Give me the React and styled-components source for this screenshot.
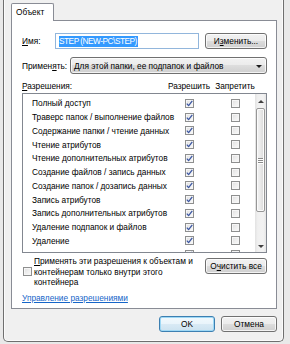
import React from "react";
import styled, { createGlobalStyle } from "styled-components";

const GlobalStyle = createGlobalStyle`
  html, body { margin: 0; padding: 0; }
  body {
    width: 290px;
    height: 344px;
    overflow: hidden;
    background: #e9e9e9;
    font-family: "Liberation Sans", Arial, sans-serif;
    font-size: 8.3px;
    color: #000;
  }
  #root { width: 290px; height: 344px; }
`;

const Screen = styled.div`
  box-sizing: border-box;
  width: 290px;
  height: 344px;
  padding-left: 3px;
`;

const Window = styled.div`
  box-sizing: border-box;
  width: 281px;
  height: 342px;
  border: 1px solid #6f6f6f;
  border-top: none;
  border-radius: 0 0 5px 5px;
  background: #f0f0f0;
  box-shadow: inset 1px 0 0 #fbfbfb, inset -1px 0 0 #fbfbfb, inset 0 -1px 0 #fbfbfb;
  padding: 3px 6px 0 7px;
  display: flex;
  flex-direction: column;
`;

const TabStrip = styled.div`
  display: flex;
  height: 18px;
  margin-bottom: -1px;
  position: relative;
  z-index: 1;
`;

const Tab = styled.div`
  box-sizing: border-box;
  width: 43px;
  height: 18px;
  border: 1px solid #898c95;
  border-bottom: none;
  border-radius: 2px 2px 0 0;
  background: #fff;
  display: flex;
  align-items: center;
  padding: 0 0 2px 4px;
`;

const Panel = styled.div`
  box-sizing: border-box;
  height: 289px;
  border: 1px solid #898c95;
  background: #fff;
  padding: 12px 9px 0 10px;
  display: flex;
  flex-direction: column;
`;

const FieldRow = styled.div`
  display: flex;
  align-items: center;
  height: ${(p) => p.$h}px;
  margin-top: ${(p) => p.$mt || 0}px;
`;

const Label = styled.div`
  width: ${(p) => p.$w}px;
  flex: none;
  white-space: nowrap;
`;

const U = styled.span`
  text-decoration: underline;
`;

const TextBox = styled.div`
  box-sizing: border-box;
  width: 144px;
  height: 16px;
  border: 1px solid #92b6dc;
  background: #fff;
  display: flex;
  align-items: center;
  padding-left: 3px;
  margin-right: 6px;
`;

const Selected = styled.span`
  background: #3399ff;
  color: #fff;
  height: 11px;
  line-height: 11px;
  padding: 0 1px 0 0;
  letter-spacing: -0.5px;
  white-space: nowrap;
`;

const Button = styled.div`
  box-sizing: border-box;
  width: ${(p) => p.$w}px;
  height: ${(p) => p.$h || 16}px;
  flex: none;
  border: 1px solid ${(p) => (p.$default ? "#3c7fb1" : "#707070")};
  border-radius: 3px;
  background: ${(p) =>
    p.$default
      ? "linear-gradient(#f2f9fd 0%, #e9f4fb 50%, #d9eaf5 50%, #cce2f0 100%)"
      : "linear-gradient(#f2f2f2 0%, #ebebeb 50%, #dddddd 50%, #cfcfcf 100%)"};
  box-shadow: inset 0 0 0 1px ${(p) => (p.$default ? "#9ed8f5" : "rgba(255,255,255,0.75)")};
  display: flex;
  align-items: center;
  justify-content: center;
  white-space: nowrap;
  align-self: ${(p) => (p.$top ? "flex-start" : "auto")};
  margin-top: ${(p) => p.$mt || 0}px;
`;

const Select = styled.div`
  box-sizing: border-box;
  width: 197px;
  height: 17px;
  border: 1px solid #707070;
  border-radius: 3px;
  background: linear-gradient(#f2f2f2 0%, #ebebeb 50%, #dddddd 50%, #cfcfcf 100%);
  box-shadow: inset 0 0 0 1px rgba(255, 255, 255, 0.75);
  display: flex;
  align-items: center;
  padding: 0 4px 0 3px;
  white-space: nowrap;
`;

const SelectText = styled.span`
  flex: 1;
`;

const DropArrow = styled.span`
  width: 0;
  height: 0;
  border-left: 3px solid transparent;
  border-right: 3px solid transparent;
  border-top: 3px solid #1a1a1a;
  margin-top: 1px;
`;

const ColumnsHeader = styled.div`
  display: grid;
  grid-template-columns: 1fr 40px 40px;
  column-gap: 6px;
  align-items: center;
  height: 11px;
  margin-top: 6px;
  padding-right: 12px;
  white-space: nowrap;
`;

const HeadCell = styled.div`
  display: flex;
  justify-content: center;
`;

const ListBox = styled.div`
  box-sizing: border-box;
  height: 160px;
  margin-top: 2px;
  border: 1px solid #828790;
  display: flex;
  overflow: hidden;
`;

const Rows = styled.div`
  flex: 1;
  min-width: 0;
  padding: 2.5px 0 0 9px;
  overflow: hidden;
`;

const Row = styled.div`
  display: grid;
  grid-template-columns: 1fr 40px 40px;
  column-gap: 6px;
  align-items: center;
  height: 13.75px;
  white-space: nowrap;
`;

const RowText = styled.div`
  min-width: 0;
  overflow: visible;
`;

const BoxCell = styled.div`
  display: flex;
  justify-content: center;
`;

const CheckBox = styled.span`
  box-sizing: border-box;
  width: 9px;
  height: 9px;
  flex: none;
  display: inline-flex;
  align-items: center;
  justify-content: center;
  border: 1px solid #8e8f8f;
  background: linear-gradient(135deg, #dedede 0%, #eeeeee 50%, #fafafa 100%);
  box-shadow: inset 0 0 0 1px #f6f6f6;
`;

const ScrollBar = styled.div`
  width: 11px;
  flex: none;
  display: flex;
  flex-direction: column;
  align-items: center;
  background: linear-gradient(to right, #e2e2e2 0%, #f0f0f0 25%, #f2f2f2 75%, #e6e6e6 100%);
`;

const ArrowZone = styled.div`
  height: ${(p) => p.$h}px;
  width: 100%;
  display: flex;
  align-items: center;
  justify-content: center;
`;

const ArrowUp = styled.span`
  width: 0;
  height: 0;
  border-left: 3px solid transparent;
  border-right: 3px solid transparent;
  border-bottom: 3px solid #404040;
`;

const ArrowDown = styled.span`
  width: 0;
  height: 0;
  border-left: 3px solid transparent;
  border-right: 3px solid transparent;
  border-top: 3px solid #404040;
`;

const Thumb = styled.div`
  box-sizing: border-box;
  width: 9px;
  height: 104px;
  border: 1px solid #979797;
  border-radius: 2px;
  background: linear-gradient(to right, #f3f3f3 0%, #e9e9e9 50%, #d9d9d9 100%);
  box-shadow: inset 0 0 0 1px #fbfbfb;
  display: flex;
  flex-direction: column;
  align-items: center;
  justify-content: center;
  gap: 1px;
`;

const Grip = styled.span`
  width: 5px;
  height: 1px;
  background: #8a8a8a;
  box-shadow: 0 1px 0 #fff;
`;

const Track = styled.div`
  flex: 1;
`;

const OptionRow = styled.div`
  display: flex;
  justify-content: space-between;
  margin-top: 3px;
`;

const OptionLeft = styled.div`
  display: flex;
  align-items: center;
  gap: 2px;
  padding-left: 1px;
`;

const OptionText = styled.div`
  line-height: 10.5px;
  white-space: nowrap;
`;

const Link = styled.a`
  margin-top: 5px;
  line-height: 11px;
  color: #1565c8;
  text-decoration: underline;
  align-self: flex-start;
  white-space: nowrap;
`;

const Footer = styled.div`
  display: flex;
  justify-content: flex-end;
  gap: 6px;
  margin-top: 7px;
`;

const Check = () => (
  <svg width="7" height="7" viewBox="0 0 7 7">
    <path d="M0.8 3.6 L2.6 5.6 L6.3 0.9" fill="none" stroke="#3d58a3" strokeWidth="1.3" strokeLinejoin="round" />
  </svg>
);

const permissions = [
  "Полный доступ",
  "Траверс папок / выполнение файлов",
  "Содержание папки / чтение данных",
  "Чтение атрибутов",
  "Чтение дополнительных атрибутов",
  "Создание файлов / запись данных",
  "Создание папок / дозапись данных",
  "Запись атрибутов",
  "Запись дополнительных атрибутов",
  "Удаление подпапок и файлов",
  "Удаление",
  "",
];

export default function App() {
  return (
    <Screen>
      <GlobalStyle />
      <Window>
        <TabStrip>
          <Tab>Объект</Tab>
        </TabStrip>
        <Panel>
          <FieldRow $h={16}>
            <Label $w={33}>
              <U>И</U>мя:
            </Label>
            <TextBox>
              <Selected>STEP (NEW-PC\STEP)</Selected>
            </TextBox>
            <Button $w={62}>
              И<U>з</U>менить...
            </Button>
          </FieldRow>
          <FieldRow $h={17} $mt={8}>
            <Label $w={48}>
              Примен<U>я</U>ть:
            </Label>
            <Select>
              <SelectText>Для этой папки, ее подпапок и файлов</SelectText>
              <DropArrow />
            </Select>
          </FieldRow>
          <ColumnsHeader>
            <div>
              <U>Р</U>азрешения:
            </div>
            <HeadCell>Разрешить</HeadCell>
            <HeadCell>Запретить</HeadCell>
          </ColumnsHeader>
          <ListBox>
            <Rows>
              {permissions.map((name, i) => (
                <Row key={i}>
                  <RowText>{name}</RowText>
                  <BoxCell>
                    <CheckBox>
                      <Check />
                    </CheckBox>
                  </BoxCell>
                  <BoxCell>
                    <CheckBox />
                  </BoxCell>
                </Row>
              ))}
            </Rows>
            <ScrollBar>
              <ArrowZone $h={14}>
                <ArrowUp />
              </ArrowZone>
              <Thumb>
                <Grip />
                <Grip />
                <Grip />
              </Thumb>
              <Track />
              <ArrowZone $h={12}>
                <ArrowDown />
              </ArrowZone>
            </ScrollBar>
          </ListBox>
          <OptionRow>
            <OptionLeft>
              <CheckBox />
              <OptionText>
                <U>П</U>рименять эти разрешения к объектам и
                <br />
                контейнерам только внутри этого
                <br />
                контейнера
              </OptionText>
            </OptionLeft>
            <Button $w={62} $top $mt={1.5}>
              О<U>ч</U>истить все
            </Button>
          </OptionRow>
          <Link>Управление разрешениями</Link>
        </Panel>
        <Footer>
          <Button $w={56} $default>
            OK
          </Button>
          <Button $w={56}>Отмена</Button>
        </Footer>
      </Window>
    </Screen>
  );
}
